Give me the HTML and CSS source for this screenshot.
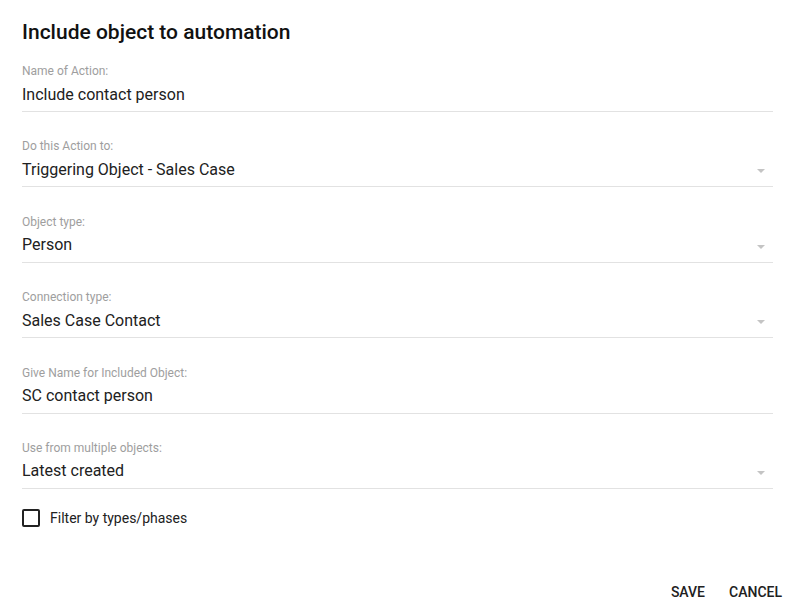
FILE: index.html
```html
<!DOCTYPE html>
<html>
<head>
<meta charset="utf-8">
<link rel="stylesheet" href="styles.css">
</head>
<body>
<div class="dialog">
  <h1 class="title">Include object to automation</h1>
  <div class="field">
    <div class="label">Name of Action:</div>
    <div class="value">Include contact person</div>
  </div>
  <div class="field">
    <div class="label">Do this Action to:</div>
    <div class="value select">Triggering Object - Sales Case<span class="arrow"></span></div>
  </div>
  <div class="field">
    <div class="label">Object type:</div>
    <div class="value select">Person<span class="arrow"></span></div>
  </div>
  <div class="field">
    <div class="label">Connection type:</div>
    <div class="value select">Sales Case Contact<span class="arrow"></span></div>
  </div>
  <div class="field">
    <div class="label">Give Name for Included Object:</div>
    <div class="value">SC contact person</div>
  </div>
  <div class="field">
    <div class="label">Use from multiple objects:</div>
    <div class="value select">Latest created<span class="arrow"></span></div>
  </div>
  <label class="check-row"><span class="box"></span><span class="check-text">Filter by types/phases</span></label>
  <div class="actions">
    <button class="btn">Save</button>
    <button class="btn">Cancel</button>
  </div>
</div>
</body>
</html>
```
FILE: styles.css
```css
html, body {
  margin: 0;
  padding: 0;
  background: #fff;
}
body {
  font-family: Roboto, "Liberation Sans", sans-serif;
  color: #212121;
  width: 796px;
  height: 616px;
  overflow: hidden;
}
.dialog {
  padding: 20px 23px 0 22px;
  display: flex;
  flex-direction: column;
}
.title {
  margin: 0 0 20px 0;
  font-size: 21px;
  line-height: 24px;
  font-weight: 500;
  color: #111;
}
.field {
  border-bottom: 1px solid #e2e2e2;
  padding-bottom: 4.5px;
  margin-bottom: 27.4px;
}
.label {
  font-size: 12px;
  line-height: 14px;
  color: #9e9e9e;
  margin-bottom: 4.5px;
}
.value {
  font-size: 16px;
  line-height: 24px;
  color: #212121;
  display: flex;
  align-items: center;
  justify-content: space-between;
}
.arrow {
  width: 0;
  height: 0;
  border-left: 4.5px solid transparent;
  border-right: 4.5px solid transparent;
  border-top: 4.5px solid #c4c4c4;
  margin-right: 8px;
  margin-top: 3px;
}
.check-row {
  display: flex;
  align-items: center;
  gap: 10px;
  height: 20px;
  margin-top: -8.5px;
}
.box {
  width: 14px;
  height: 14px;
  border: 2px solid #222;
  border-radius: 2px;
}
.check-text {
  font-size: 14px;
  line-height: 20px;
  color: #212121;
}
.actions {
  display: flex;
  justify-content: flex-end;
  gap: 8px;
  margin-top: 46px;
  margin-right: -17px;
}
.btn {
  font-family: Roboto, "Liberation Sans", sans-serif;
  font-size: 14px;
  font-weight: 500;
  text-transform: uppercase;
  line-height: 36px;
  height: 36px;
  padding: 0 8px;
  border: none;
  background: transparent;
  color: #212121;
  cursor: pointer;
}
```
